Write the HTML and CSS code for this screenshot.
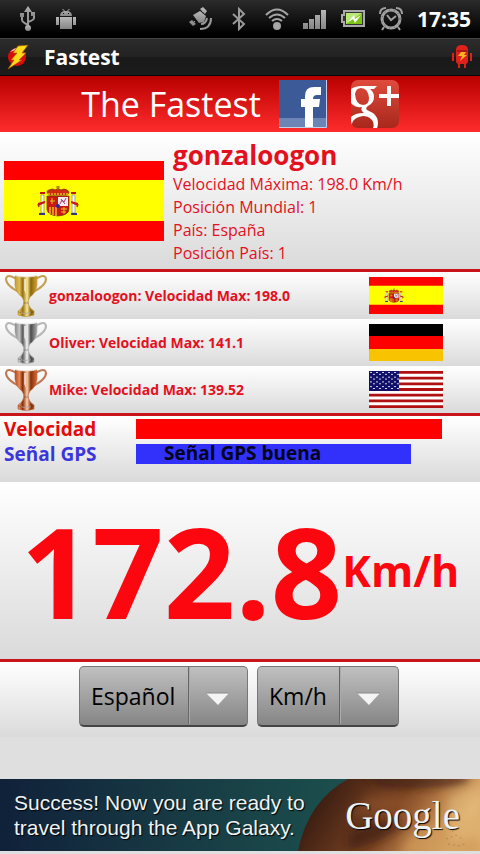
FILE: index.html
```html
<!DOCTYPE html>
<html lang="es">
  <head>
    <meta charset="UTF-8" />
    <meta name="viewport" content="width=device-width, initial-scale=1.0" />
    <title>Fastest</title>
    <link rel="stylesheet" href="styles.css">
  </head>
  <body>
    <!-- shared drawings -->
    <svg class="defs" width="0" height="0" aria-hidden="true">
      <defs>
        <linearGradient id="metal" x1="0" y1="0" x2="0" y2="1">
          <stop offset="0" stop-color="#b8b8b8"/><stop offset="1" stop-color="#858585"/>
        </linearGradient>
        <linearGradient id="gold" x1="0" x2="1" y1="0" y2="0">
          <stop offset="0" stop-color="#c79a30"/><stop offset=".2" stop-color="#e0bd58"/><stop offset=".35" stop-color="#96700f"/>
          <stop offset=".55" stop-color="#fbe89a"/><stop offset=".72" stop-color="#8d6508"/><stop offset="1" stop-color="#d0a437"/>
        </linearGradient>
        <linearGradient id="silver" x1="0" x2="1" y1="0" y2="0">
          <stop offset="0" stop-color="#888"/><stop offset=".2" stop-color="#c4c4c4"/><stop offset=".35" stop-color="#5a5a5a"/>
          <stop offset=".55" stop-color="#f8f8f8"/><stop offset=".72" stop-color="#4a4a4a"/><stop offset="1" stop-color="#aaa"/>
        </linearGradient>
        <linearGradient id="bronze" x1="0" x2="1" y1="0" y2="0">
          <stop offset="0" stop-color="#b04a20"/><stop offset=".2" stop-color="#e88a58"/><stop offset=".35" stop-color="#862c08"/>
          <stop offset=".55" stop-color="#ffd0a8"/><stop offset=".72" stop-color="#8a3008"/><stop offset="1" stop-color="#d86a38"/>
        </linearGradient>
        <pattern id="stars" width="6" height="5" patternUnits="userSpaceOnUse">
          <path d="M1 1h2v1H1zM4 3h2v1H4z" fill="#dcdcf0"/>
        </pattern>
        <symbol id="flag-es" viewBox="0 0 160 80" preserveAspectRatio="none">
          <path fill="#f00" d="M0 0h160v80H0z"/>
          <path fill="#ff0" d="M0 19h160v41H0z"/>
          <!-- coat of arms -->
          <path fill="#f4f4f4" stroke="#777" stroke-width=".6" d="M37 34h3v18h-3zM68 34h3v18h-3z"/>
          <path fill="#c81414" d="M36 31h5v2h-5zM67 31h5v2h-5zM34 42l7-2v2l-7 3zM67 40l7 2v3l-7-3z"/>
          <path fill="#338" d="M35 52h6v2h-6zM67 52h6v2h-6z"/>
          <path fill="none" stroke="#b52a10" stroke-width="1.5" d="M35 46l-1-3M73 46l1-3"/>
          <path fill="#c91a12" stroke="#6d2c10" stroke-width=".7" d="M43 35h22v13q0 6-11 7-11-1-11-7z"/>
          <path fill="#f7e8ee" d="M54 36h10v9H54z"/>
          <path stroke="#a03a70" fill="none" d="M56 43l2-4 2 2 2-4M57 38l4 5"/>
          <path stroke="#ebca20" stroke-width="1.4" d="M46 46v7M49 46v8M52 46v9"/>
          <path stroke="#e8c020" fill="none" d="M57 48h6M57 51h5M60 46v7M46 40h5M48 37v6"/>
          <circle cx="54" cy="45" r="2" fill="#28289b"/>
          <path fill="#d02a12" stroke="#80400c" stroke-width=".8" d="M45 34q-4-4 0-5 4-2 6 0 3-3 6 0 3-2 6 0 4 2 0 5z"/>
          <path stroke="#e7b71c" stroke-width="1.5" stroke-dasharray="2 1" d="M44 33h20"/>
          <path stroke="#a66614" d="M54 25v4M52 26h4"/>
        </symbol>
        <symbol id="cup" viewBox="0 0 42 43">
          <path fill="none" stroke-width="2" stroke-opacity=".85" d="M11 5Q2-1 1 5q0 7 15 14M31 5q9-6 10 0 0 7-15 14"/>
          <path stroke-opacity=".6" d="M10 2q11 2 22 0v9q-1 8-7 12-2 3-2 6 1 5 6 8v4q-8 3-16 0v-4q5-3 6-8 0-3-2-6-6-4-7-12z"/>
          <path fill="#fff" fill-opacity=".6" stroke="none" d="M10 2q11-3 22 0-11 3-22 0M19 5h2v15l-2-4zM16 38q5 2 10 0v1q-5 2-10 0"/>
          <path fill="none" stroke="#000" stroke-opacity=".25" d="M18 29h6M13 38q8 3 16 0"/>
        </symbol>
      </defs>
    </svg>

    <div class="status-bar">
      <div class="notifications">
        <svg width="16" height="26" viewBox="0 0 16 26" fill="url(#metal)" stroke="#999" stroke-width="2">
          <path fill="none" d="M8 4v18M2 10v4q0 2 6 5M14 9v3q0 2-6 4"/>
          <path stroke="none" d="M8 0l4 6H4zM0 7h4v4H0zM11 6h4v4h-4z"/><circle cx="8" cy="22" r="3" stroke="none"/>
        </svg>
        <svg width="20" height="20" viewBox="0 0 20 20" fill="url(#metal)">
          <path d="M4 7q0-4 4-5L6 0h1l2 2h2l2-2h1l-2 2q4 1 4 5z"/>
          <path d="M4 8h12v12H4zM0 8h3v8H0zM17 8h3v8h-3z"/>
          <path fill="#111" d="M7 4h1v1H7zM12 4h1v1h-1z"/>
        </svg>
      </div>
      <div class="system">
        <svg width="24" height="24" viewBox="0 0 24 24">
          <g fill="url(#metal)"><path d="M4 8l7-4 6 5-2 6-5 1z"/><path d="M11 2l3-2 4 4-2 3zM0 15l3-2 4 4-3 2z"/><path stroke="#999" d="M14 4l-2 2M6 14l-2 2"/></g>
          <path d="M12 17q5 0 6-6M11 22q11 0 11-11" fill="none" stroke="#999" stroke-width="2"/>
        </svg>
        <svg width="24" height="24" viewBox="-4 0 24 24" fill="none" stroke="#9a9a9a" stroke-width="2">
          <path d="M2 7l11 10-5 5V2l5 5L2 17"/>
        </svg>
        <svg width="24" height="22" viewBox="0 0 24 22" fill="none" stroke="#a5a5a5" stroke-width="2">
          <path d="M1 7Q12-4 23 7M4 10q8-7 16 0M7 13q5-4 10 0"/><circle cx="12" cy="18" r="3" fill="#aaa"/>
        </svg>
        <svg width="24" height="22" viewBox="0 0 24 22" fill="url(#metal)">
          <path d="M0 15h5v6H0zM6 11h5v10H6zM12 7h5v14h-5zM18 2h5v19h-5z"/>
        </svg>
        <svg width="24" height="18" viewBox="0 0 24 18">
          <path d="M3 1h20v15H3V12H1V5h2z" fill="#333" stroke="#aaa" stroke-width="2"/>
          <path d="M5 3h16v11H5z" fill="#7cc414"/><path d="M5 3h16L5 14z" fill="#b8e878"/>
          <path d="M7 12l6-7 1 4 6-4-6 8-2-4z" fill="#fff"/>
        </svg>
        <svg width="24" height="24" viewBox="0 0 24 24" fill="none" stroke="#a0a0a0" stroke-width="2">
          <circle cx="12" cy="12" r="9" stroke-width="3"/><path d="M1 7q0-6 6-6M17 1q6 0 6 6M5 20l-2 3M19 20l2 3M8 8l4 5 5-4"/>
          <circle cx="12" cy="12" r="9" stroke="#555" stroke-width="1" stroke-dasharray="1 4"/>
        </svg>
        <time class="clock">17:35</time>
      </div>
    </div>

    <div class="title-bar">
      <svg width="22" height="24" viewBox="0 0 22 24">
        <circle cx="10" cy="12" r="9" fill="#d90b0b"/><path d="M3 7q6-7 13-2-6-1-13 2" fill="#fff" fill-opacity=".7"/>
        <path d="M11 1L21 0l-6 8h4l-7 7h3L1 24l6-9H4l6-7H6z" fill="#ffd91c" stroke="#a95a00" stroke-width=".7"/>
      </svg>
      <h1>Fastest</h1>
      <svg width="20" height="24" viewBox="0 0 20 24">
        <path d="M4 5q0-5 6-5t6 5v11q0 3-3 3H7q-3 0-3-3z" fill="#e0201c"/>
        <path d="M0 8h2v8H0zM18 8h2v8h-2zM6 18h2v5H6zM12 18h2v5h-2z" fill="#dd2018"/>
        <path d="M5 6h10" stroke="#7c0808"/><path d="M9 7h5l-2 3h3l-7 6 2-5H6z" fill="#ffb321"/>
      </svg>
    </div>

    <header class="banner">
      <h2>The Fastest</h2>
      <a href="#facebook" aria-label="Facebook">
        <svg width="48" height="48" viewBox="0 0 48 48">
          <path fill="#3c5a98" d="M0 0h48v48H0z"/><path fill="#6d84b7" d="M0 38h48v9H0z"/>
          <path fill="#fff" d="M26 47V27h-4v-8h4v-3q0-9 9-9h7v8h-4q-4 0-4 4h7l-1 8h-6v20z"/>
          <path fill="none" stroke="#c5cfe3" d="M47.5 0v47.5H0"/>
        </svg>
      </a>
      <a href="#plus" aria-label="Google Plus">
        <svg width="48" height="48" viewBox="0 0 48 48">
          <defs><linearGradient id="plus" x1="0" y1="0" x2="0" y2="1"><stop offset="0" stop-color="#df4b3c"/><stop offset="1" stop-color="#a8271c"/></linearGradient>
          <clipPath id="round"><rect width="48" height="48" rx="7"/></clipPath></defs>
          <g clip-path="url(#round)">
            <rect width="48" height="48" fill="url(#plus)"/>
            <path fill="#fff" d="M36 6h4v8h8v4h-8v8h-4v-8h-8v-4h8z"/>
            <path fill="#fff" fill-rule="evenodd" d="M26 6l-3 3h-4q4 3 4 8 0 6-6 9-3 2-1 4l6 3q5 4 5 10 0 3-1 5h-4q2-5-2-9-3-3-8-3-7 1-10 5-2 3-1 7H0V37q4-4 13-4-4-3-2-6-7 1-11-4V9q4-3 11-3zM10 8q-5 0-6 6 1 11 8 11 6 0 6-7-1-10-8-10z"/>
          </g>
        </svg>
      </a>
    </header>

    <section class="profile">
      <svg class="flag-big" role="img" aria-label="España"><use href="#flag-es"/></svg>
      <div class="profile-info">
        <h3>gonzaloogon</h3>
        <p>Velocidad Máxima: 198.0 Km/h</p>
        <p>Posición Mundial: 1</p>
        <p>País: España</p>
        <p>Posición País: 1</p>
      </div>
    </section>

    <ol class="ranking">
      <li>
        <svg class="cup" fill="url(#gold)" stroke="#b88f36"><use href="#cup"/></svg>
        <span>gonzaloogon: Velocidad Max: 198.0</span>
        <svg class="flag"><use href="#flag-es"/></svg>
      </li>
      <li>
        <svg class="cup" fill="url(#silver)" stroke="#aaa"><use href="#cup"/></svg>
        <span>Oliver: Velocidad Max: 141.1</span>
        <svg class="flag" viewBox="0 0 74 37">
          <path d="M0 0h74v12H0z"/><path fill="#f00" d="M0 12h74v13H0z"/><path fill="#f8c300" d="M0 25h74v12H0z"/>
        </svg>
      </li>
      <li>
        <svg class="cup" fill="url(#bronze)" stroke="#b5623a"><use href="#cup"/></svg>
        <span>Mike: Velocidad Max: 139.52</span>
        <svg class="flag" viewBox="0 0 74 39" preserveAspectRatio="none">
          <path fill="#fff" d="M0 0h74v39H0z"/>
          <path fill="#b01010" d="M0 0h74v3H0zM0 6h74v3H0zM0 12h74v3H0zM0 18h74v3H0zM0 24h74v3H0zM0 30h74v3H0zM0 36h74v3H0z"/>
          <path fill="#10106a" d="M0 0h30v21H0z"/><path fill="url(#stars)" d="M0 0h30v20H0z"/>
        </svg>
      </li>
    </ol>

    <section class="gauges">
      <div class="gauge speed-gauge">
        <span class="gauge-name">Velocidad</span>
        <div class="track"><div class="bar" style="width: 89%"></div></div>
      </div>
      <div class="gauge gps-gauge">
        <span class="gauge-name">Señal GPS</span>
        <div class="track"><div class="bar" style="width: 80%">Señal GPS buena</div></div>
      </div>
    </section>

    <section class="speed">
      <span class="number">172.8</span>
      <span class="unit">Km/h</span>
    </section>

    <form class="options">
      <div class="spinner">
        <select class="language" aria-label="Idioma">
          <option>Español</option>
          <option>English</option>
        </select>
        <svg class="arrow" viewBox="0 0 60 60"><path d="M.5 1v57" stroke="#666"/><path d="M1.5 1v57" stroke="#aaa"/><path fill="#f4f4f4" d="M18 27h23L30 39z"/><path stroke="#888" d="M18 27h23"/></svg>
      </div>
      <div class="spinner">
        <select class="units" aria-label="Unidad">
          <option>Km/h</option>
          <option>Mph</option>
        </select>
        <svg class="arrow" viewBox="0 0 60 60"><path d="M.5 1v57" stroke="#666"/><path d="M1.5 1v57" stroke="#aaa"/><path fill="#f4f4f4" d="M18 27h23L30 39z"/><path stroke="#888" d="M18 27h23"/></svg>
      </div>
    </form>

    <a class="ad" href="#ad">
      <svg class="planet" viewBox="0 0 182 72" preserveAspectRatio="xMaxYMid slice" aria-hidden="true">
        <defs>
          <linearGradient id="mars" x1="0" x2="1" y1="0" y2=".25">
            <stop offset="0" stop-color="#1f100b"/><stop offset=".28" stop-color="#4c2716"/><stop offset=".6" stop-color="#7b4423"/>
            <stop offset=".8" stop-color="#b57b46"/><stop offset="1" stop-color="#dcae6f"/>
          </linearGradient>
          <filter id="soft"><feGaussianBlur stdDeviation="5"/></filter>
          <clipPath id="edge"><path d="M0 72Q10 22 50 0h132v72z"/></clipPath>
        </defs>
        <g clip-path="url(#edge)">
          <path fill="url(#mars)" d="M0 0h182v72H0z"/>
          <g filter="url(#soft)">
            <path fill="#3c1c10" fill-opacity=".7" d="M60-4h110v8q-40 8-85 4zM50 54q30-18 60-8l-30 16-30 10z"/>
            <path fill="#a4602e" fill-opacity=".4" d="M70 16q30 0 50 8l-30 8-40 4z"/>
            <path fill="#d09a58" fill-opacity=".7" d="M110 60q20-16 72-24v40h-80z"/>
            <path fill="#e8c080" fill-opacity=".5" d="M150 18l32-10v50l-30 4z"/>
          </g>
          <path fill="none" stroke="#70431e" stroke-opacity=".3" stroke-dasharray="2 3" d="M148 60l10-4 8 5M150 65l12 2 6-3M154 53l4-3"/>
        </g>
      </svg>
      <p>Success! Now you are ready to<br>travel through the App Galaxy.</p>
      <span class="google">Google</span>
    </a>
  </body>
</html>
```

FILE: styles.css
```css
* {
  box-sizing: border-box;
}

body {
  margin: 0;
  min-height: 100vh;
  font-family: "Open Sans", "Noto Sans", sans-serif;
  background-color: #dfdfdf;
  color: #e3101e;
}

h1, h2, h3, p, ol {
  margin: 0;
  padding: 0;
}

svg {
  display: block;
  flex: none;
}

.defs {
  position: absolute;
}

/* android bars */
.status-bar {
  display: flex;
  align-items: center;
  justify-content: space-between;
  height: 38px;
  padding: 0 9px 0 20px;
  background: linear-gradient(#2b2b2b, #000 90%);
}

.notifications,
.system {
  display: flex;
  align-items: center;
}

.notifications {
  gap: 20px;
}

.system {
  gap: 14px;
}

.clock {
  color: #fff;
  font-size: 21px;
  font-weight: bold;
}

.title-bar {
  display: flex;
  align-items: center;
  gap: 15px;
  height: 38px;
  padding: 0 8px 0 7px;
  border-top: 1px solid #444;
  border-bottom: 1px solid #0a0a0a;
  background: linear-gradient(#2c2c2c, #222 50%, #191919 50%, #1c1c1c);
}

.title-bar h1 {
  flex: 1;
  color: #fff;
  font-size: 21px;
  line-height: 34px;
}

.banner {
  display: flex;
  align-items: center;
  justify-content: center;
  height: 56px;
  background: linear-gradient(#b80000, #ff2c2c);
}

.banner h2 {
  color: #fff;
  font-size: 34px;
  font-weight: normal;
  line-height: 56px;
}

.banner a {
  margin-left: 18px;
}

.banner a + a {
  margin-left: 24px;
}

/* panels */
.profile,
.ranking li,
.gauges,
.speed,
.options {
  background: linear-gradient(#fff, #dadada);
}

.profile,
.ranking,
.speed {
  border-bottom: 3px solid #c8141a;
}

.profile {
  display: flex;
  align-items: center;
  gap: 9px;
  padding: 5px 4px 4px;
}

.flag-big {
  width: 160px;
  height: 80px;
}

.profile h3 {
  font-size: 26px;
  line-height: 36px;
}

.profile p {
  font-size: 16px;
  line-height: 23px;
}

.ranking {
  list-style: none;
}

.ranking li {
  display: flex;
  align-items: center;
  height: 47px;
  padding: 0 37px 0 5px;
  font-size: 14px;
  font-weight: bold;
}

.ranking span {
  flex: 1;
  margin-left: 2px;
}

.cup {
  width: 42px;
  height: 43px;
}

.flag {
  width: 74px;
  height: 37px;
}

.gauges {
  padding: 0 0 16px 4px;
}

.gauge {
  display: flex;
  align-items: center;
  height: 25px;
  font-size: 19px;
  font-weight: bold;
  line-height: 18px;
}

.gauge-name {
  width: 132px;
}

.track {
  flex: 1;
}

.bar {
  height: 20px;
  background-color: #f00;
}

.speed-gauge {
  color: #e60a0a;
}

.gps-gauge {
  color: #3a36dc;
}

.gps-gauge .bar {
  padding-left: 28px;
  background-color: #3131fb;
  color: #04041c;
}

.speed {
  display: flex;
  align-items: center;
  justify-content: center;
  height: 180px;
  color: #fc0710;
  font-weight: bold;
}

.number {
  font-size: 125px;
}

.unit {
  font-size: 43px;
}

.options {
  display: flex;
  justify-content: center;
  gap: 9px;
  padding: 4px 4px 10px 2px;
}

.spinner {
  position: relative;
}

.spinner select {
  appearance: none;
  height: 61px;
  padding: 0 71px 0 11px;
  border: 1px solid #777;
  border-bottom: 2px solid #444;
  border-radius: 5px;
  background: linear-gradient(#c0c0c0, #858585);
  color: #000;
  font-family: inherit;
  font-size: 23px;
}

.arrow {
  position: absolute;
  top: 0;
  right: 0;
  width: 60px;
  height: 60px;
  pointer-events: none;
}

/* advert */
.ad {
  position: relative;
  display: flex;
  align-items: center;
  justify-content: space-between;
  height: 72px;
  margin-top: 42px;
  padding: 0 20px 0 14px;
  background: linear-gradient(90deg, #10213a, #173943 35%, #1c514e 75%);
  color: #eef3f5;
  font-family: "Liberation Sans", Arial, sans-serif;
  text-decoration: none;
}

.planet {
  position: absolute;
  top: 0;
  right: 0;
  width: 182px;
  height: 72px;
}

.ad p,
.google {
  position: relative;
  text-shadow: 1px 1px 1px #000;
}

.ad p {
  font-size: 21px;
  line-height: 25px;
}

.google {
  font-family: "Liberation Serif", "Times New Roman", serif;
  font-size: 39px;
}
```
